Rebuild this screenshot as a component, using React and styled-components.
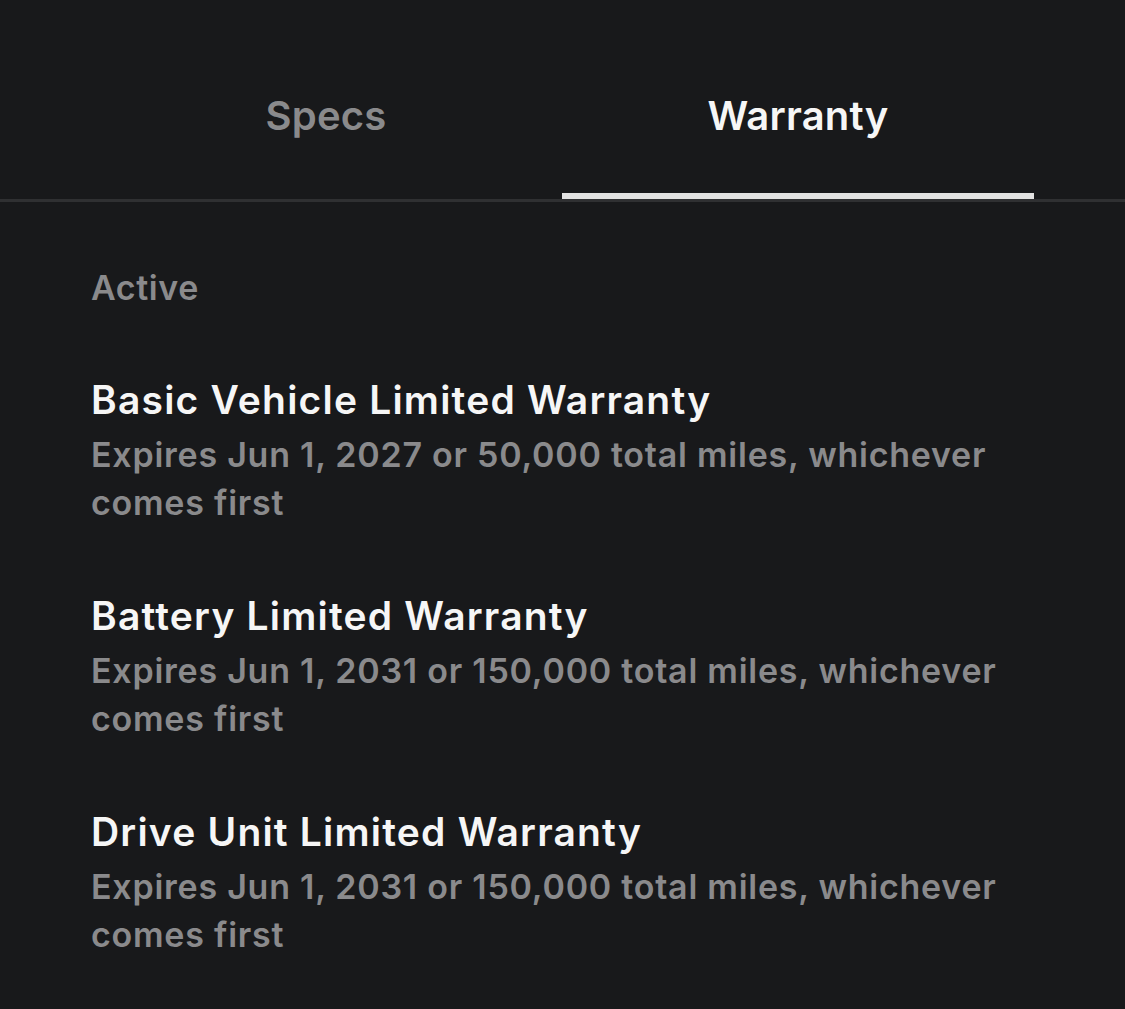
import React from "react";
import styled, { createGlobalStyle } from "styled-components";

const Global = createGlobalStyle`
  html, body { margin: 0; padding: 0; background: #18191b; }
  body { font-family: Inter, "Noto Sans", sans-serif; -webkit-font-smoothing: antialiased; }
`;

const Page = styled.div`
  width: 1125px;
  min-height: 1009px;
  background: #18191b;
  color: #f4f4f4;
`;

const TabBar = styled.div`
  display: grid;
  grid-template-columns: 1fr 1fr;
  padding: 0 91px 0 90px;
  border-bottom: 3px solid #2f3032;
`;

const Tab = styled.div`
  height: 199px;
  box-sizing: border-box;
  padding-top: 92px;
  text-align: center;
  font-size: 40px;
  font-weight: 600;
  letter-spacing: 0.2px;
  line-height: 48px;
  color: ${(p) => (p.$active ? "#f6f6f6" : "#8a8a8c")};
  border-bottom: 6px solid ${(p) => (p.$active ? "#e2e2e2" : "transparent")};
`;

const Content = styled.div`
  padding: 62px 91px 0 91px;
`;

const SectionLabel = styled.div`
  font-size: 34px;
  font-weight: 600;
  letter-spacing: 0.6px;
  line-height: 48px;
  color: #8a8a8c;
  margin-bottom: 64px;
`;

const List = styled.div`
  display: flex;
  flex-direction: column;
  gap: 65px;
`;

const Item = styled.div`
  display: flex;
  flex-direction: column;
  gap: 7px;
`;

const Title = styled.div`
  font-size: 39px;
  font-weight: 600;
  letter-spacing: 1.2px;
  line-height: 48px;
  color: #f6f6f6;
`;

const Detail = styled.div`
  font-size: 34px;
  font-weight: 600;
  letter-spacing: 0.75px;
  line-height: 48px;
  color: #8a8a8c;
`;

const items = [
  { title: "Basic Vehicle Limited Warranty", detail: "Expires Jun 1, 2027 or 50,000 total miles, whichever comes first" },
  { title: "Battery Limited Warranty", detail: "Expires Jun 1, 2031 or 150,000 total miles, whichever comes first" },
  { title: "Drive Unit Limited Warranty", detail: "Expires Jun 1, 2031 or 150,000 total miles, whichever comes first" },
];

export default function App() {
  return (
    <Page>
      <Global />
      <TabBar>
        <Tab>Specs</Tab>
        <Tab $active>Warranty</Tab>
      </TabBar>
      <Content>
        <SectionLabel>Active</SectionLabel>
        <List>
          {items.map((it) => (
            <Item key={it.title}>
              <Title>{it.title}</Title>
              <Detail>{it.detail}</Detail>
            </Item>
          ))}
        </List>
      </Content>
    </Page>
  );
}
